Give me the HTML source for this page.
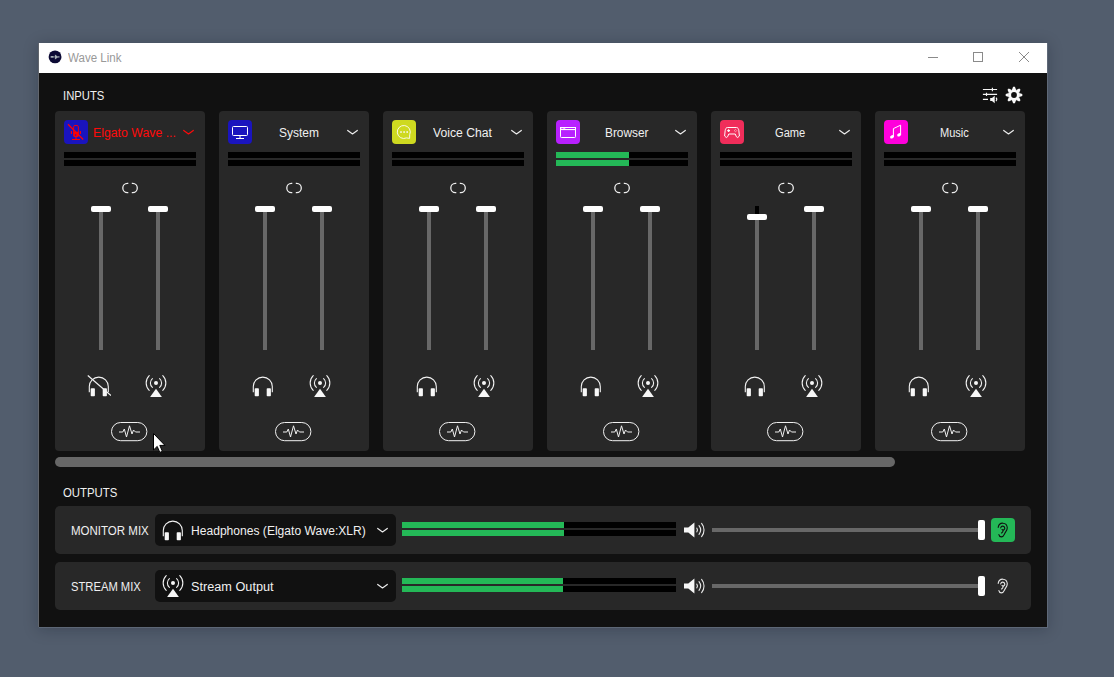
<!DOCTYPE html>
<html lang="en"><head><meta charset="utf-8"><title>Wave Link</title>
<style>
html,body{margin:0;padding:0}
body{width:1114px;height:677px;overflow:hidden;background:#525d6d;position:relative;font-family:"Liberation Sans","DejaVu Sans",sans-serif;font-size:12.500px;color:#f0f0f0}
.abs,.t,svg,.chev{position:absolute}
.t{white-space:nowrap;line-height:16px;height:16px;transform-origin:0 50%}
#win{position:absolute;left:39px;top:43px;width:1008px;height:584px;background:#111111;box-shadow:0 2px 14px 1px rgba(10,15,25,.23)}
#title{position:absolute;left:0;top:0;width:1008px;height:30px;background:#fff}
.card{position:absolute;top:111px;width:150px;height:340px;background:#282828;border-radius:4px}
.ico{position:absolute;left:9px;top:9px;width:24px;height:24px;border-radius:4px}
.meter{position:absolute;background:#000;height:6px}
.meter i{position:absolute;left:0;top:0;height:6px;background:#24b857;display:block}
.track{position:absolute;width:4px;background:#686868}
.knob{position:absolute;width:20px;height:6.300px;background:#fff;border-radius:2px}
.row{position:absolute;left:55px;width:976px;height:48px;background:#282828;border-radius:5px}
.dd{position:absolute;left:155px;width:241px;height:32px;background:#111111;border-radius:5px}
.htrack{position:absolute;height:4px;background:#686868}
.hknob{position:absolute;width:7px;height:20px;background:#fff;border-radius:2px}
</style></head><body>
<div id="win"><div id="title"></div></div>

<svg style="left:47px;top:49px" width="16" height="16" viewBox="0 0 16 16"><circle cx="8.050" cy="7.900" r="6.450" fill="#0c0a35"/><path d="M3.100 7.900L4.300 7.100h2.400v1.600H4.300zM6.900 7.900l0.900-0.600v1.200zM7.900 5.400l3.600 2.500-3.600 2.500zM11.200 7.100l2 0.800-2 0.800z" fill="#a8b0b6"/></svg>
<span class="t " style="left:68.3px;top:50.1px;transform:scaleX(0.9622);color:#999;font-size:12px">Wave Link</span>
<svg style="left:924px;top:48px" width="110" height="18" viewBox="0 0 110 18"><g fill="none" stroke="#8a8a8a" stroke-width="1"><path d="M4 9.500h10"/><rect x="49.500" y="4.500" width="9" height="9"/><path d="M95 4l10 10M105 4l-10 10"/></g></svg>

<span class="t " style="left:63.2px;top:88px;transform:scaleX(0.9017)">INPUTS</span>
<svg style="left:980px;top:85px" width="46" height="20" viewBox="0 0 46 20"><g fill="none" stroke="#f5f5f5" stroke-width="1.150"><path d="M2.900 4.500h14.200M2.900 9.400h14.200M2.900 14.400h5.100M12.400 2.800v3.400M6.500 7.700v3.400"/></g><path d="M10.200 13h1.800l2.700-2.300v7.500L12 16h-1.800z" fill="#f5f5f5"/><path d="M16 12.700a2.500 2.500 0 0 1 0 3.400" fill="none" stroke="#f5f5f5" stroke-width="1.100"/>
<g transform="translate(34 10)"><g fill="#fafafa"><circle r="5.500" /><g id="teeth"><path d="M-2.100 -5.100L-0.900 -8.300H0.900L2.100 -5.100z"/><path d="M-2.100 -5.100L-0.900 -8.300H0.900L2.100 -5.100z" transform="rotate(45)"/><path d="M-2.100 -5.100L-0.900 -8.300H0.900L2.100 -5.100z" transform="rotate(90)"/><path d="M-2.100 -5.100L-0.900 -8.300H0.900L2.100 -5.100z" transform="rotate(135)"/><path d="M-2.100 -5.100L-0.900 -8.300H0.900L2.100 -5.100z" transform="rotate(180)"/><path d="M-2.100 -5.100L-0.900 -8.300H0.900L2.100 -5.100z" transform="rotate(225)"/><path d="M-2.100 -5.100L-0.900 -8.300H0.900L2.100 -5.100z" transform="rotate(270)"/><path d="M-2.100 -5.100L-0.900 -8.300H0.900L2.100 -5.100z" transform="rotate(315)"/></g></g><circle r="2.900" fill="#111"/></g></svg>

<div class="card" style="left:55px">
<div class="ico" style="background:#1a14be"><svg style="left:0;top:0" width="24" height="24" viewBox="0 0 24 24"><g fill="none" stroke="#ff0000" stroke-width="1.1">
   <path d="M9.600 12V6.900a1.400 1.400 0 0 1 1.400-1.400h2a1.400 1.400 0 0 1 1.400 1.400V12" stroke-width="0.900"/>
   <path d="M9.150 11.700h5.700v3.900a1.400 1.400 0 0 1-1.400 1.400h-2.900a1.400 1.400 0 0 1-1.400-1.400z" fill="#ff0000" stroke="none"/>
   <circle cx="11.6" cy="15" r="0.8" fill="#1a14be" stroke="none"/>
   <path d="M12 17v2.4M8 19.5h8M7.4 11v3M16.4 11v3"/>
   <path d="M4 4.3L19.2 19.5" stroke-width="1.3"/></g></svg></div>
<span class="t " style="left:37.8px;top:13.7px;transform:scaleX(0.9834);color:#ff0a0a">Elgato Wave ...</span>
<svg class="chev" style="left:126.5px;top:17.5px" width="13" height="8" viewBox="0 0 13 8"><path d="M1.700 1.400L6.500 4.900 11.300 1.400" fill="none" stroke="#ff0a0a" stroke-width="1.200" stroke-linecap="round" stroke-linejoin="round"/></svg>
<div class="meter" style="left:9px;top:41px;width:132px"></div>
<div class="meter" style="left:9px;top:49px;width:132px"></div>
<svg style="left:66px;top:70px" width="18" height="14" viewBox="0 0 18 14"><g fill="none" stroke="#eee" stroke-width="1.300"><path d="M7.300 2.400H6.400a4.600 4.600 0 0 0 0 9.200h0.900"/><path d="M10.800 2.400h0.900a4.600 4.600 0 0 1 0 9.200h-0.900"/></g></svg>
<div class="track" style="left:44px;top:97.4px;height:141.6px"></div>
<div class="track" style="left:101px;top:98px;height:141px"></div>
<div class="knob" style="left:36px;top:94.9px"></div>
<div class="knob" style="left:93px;top:94.900px"></div>
<svg style="left:32.300px;top:264px" width="24" height="24" viewBox="-1 -1 24 24"><path d="M1.300 16.200V10.600a9.500 9.500 0 0 1 19 0v5.600" fill="none" stroke="#f2f2f2" stroke-width="1.100"/><rect x="2.700" y="12.300" width="4.200" height="8" rx="0.800" fill="#f7f7f7"/><rect x="14.700" y="12.300" width="4.200" height="8" rx="0.800" fill="#f7f7f7"/><path d="M-0.200 -0.500L23 19.600" stroke="#f2f2f2" stroke-width="1.200" fill="none"/></svg>
<svg style="left:90px;top:264px" width="22" height="24" viewBox="0 0 22 24"><g fill="none" stroke="#f2f2f2" stroke-width="1.100" stroke-linecap="round"><path d="M7.400 3.600a5.800 5.800 0 0 0 0 8.800M14.600 3.600a5.800 5.800 0 0 1 0 8.800"/><path d="M4.200 0.700a10.300 10.300 0 0 0 0 14.600M17.800 0.700a10.300 10.300 0 0 1 0 14.600"/></g><circle cx="11" cy="8" r="2" fill="#f7f7f7"/><path d="M11 13.800L16.900 22H5.100z" fill="#f7f7f7"/></svg>
<svg style="left:55px;top:310px" width="40" height="22" viewBox="0 0 40 22"><rect x="1.500" y="1.500" width="35.400" height="18.200" rx="9.100" fill="none" stroke="#f0f0f0" stroke-width="1"/><path d="M9 11h3.800l1.500-3 2.200 8 3-11.200 2.500 8.200 1.500-4 2 2H30" fill="none" stroke="#f0f0f0" stroke-width="1" stroke-linejoin="round"/></svg>
</div>
<div class="card" style="left:219px">
<div class="ico" style="background:#1a14be"><svg style="left:0;top:0" width="24" height="24" viewBox="0 0 24 24"><g fill="none" stroke="#fff" stroke-width="1"><rect x="4.500" y="6.500" width="15" height="9" rx="1"/><path d="M12 16v2M8 18.500h8"/></g></svg></div>
<span class="t " style="left:60.3px;top:13.7px;transform:scaleX(0.9568);color:#f0f0f0">System</span>
<svg class="chev" style="left:126.5px;top:17.5px" width="13" height="8" viewBox="0 0 13 8"><path d="M1.700 1.400L6.500 4.900 11.300 1.400" fill="none" stroke="#ededed" stroke-width="1.200" stroke-linecap="round" stroke-linejoin="round"/></svg>
<div class="meter" style="left:9px;top:41px;width:132px"></div>
<div class="meter" style="left:9px;top:49px;width:132px"></div>
<svg style="left:66px;top:70px" width="18" height="14" viewBox="0 0 18 14"><g fill="none" stroke="#eee" stroke-width="1.300"><path d="M7.300 2.400H6.400a4.600 4.600 0 0 0 0 9.200h0.900"/><path d="M10.800 2.400h0.900a4.600 4.600 0 0 1 0 9.200h-0.900"/></g></svg>
<div class="track" style="left:44px;top:97.4px;height:141.6px"></div>
<div class="track" style="left:101px;top:98px;height:141px"></div>
<div class="knob" style="left:36px;top:94.9px"></div>
<div class="knob" style="left:93px;top:94.900px"></div>
<svg style="left:32.300px;top:264px" width="24" height="24" viewBox="-1 -1 24 24"><path d="M1.300 16.200V10.600a9.500 9.500 0 0 1 19 0v5.600" fill="none" stroke="#f2f2f2" stroke-width="1.100"/><rect x="2.700" y="12.300" width="4.200" height="8" rx="0.800" fill="#f7f7f7"/><rect x="14.700" y="12.300" width="4.200" height="8" rx="0.800" fill="#f7f7f7"/></svg>
<svg style="left:90px;top:264px" width="22" height="24" viewBox="0 0 22 24"><g fill="none" stroke="#f2f2f2" stroke-width="1.100" stroke-linecap="round"><path d="M7.400 3.600a5.800 5.800 0 0 0 0 8.800M14.600 3.600a5.800 5.800 0 0 1 0 8.800"/><path d="M4.200 0.700a10.300 10.300 0 0 0 0 14.600M17.800 0.700a10.300 10.300 0 0 1 0 14.600"/></g><circle cx="11" cy="8" r="2" fill="#f7f7f7"/><path d="M11 13.800L16.900 22H5.100z" fill="#f7f7f7"/></svg>
<svg style="left:55px;top:310px" width="40" height="22" viewBox="0 0 40 22"><rect x="1.500" y="1.500" width="35.400" height="18.200" rx="9.100" fill="none" stroke="#f0f0f0" stroke-width="1"/><path d="M9 11h3.800l1.500-3 2.200 8 3-11.200 2.500 8.200 1.500-4 2 2H30" fill="none" stroke="#f0f0f0" stroke-width="1" stroke-linejoin="round"/></svg>
</div>
<div class="card" style="left:383px">
<div class="ico" style="background:#ced920"><svg style="left:0;top:0" width="24" height="24" viewBox="0 0 24 24"><g fill="none" stroke="#fbfbec" stroke-width="0.95"><path d="M17.700 14.700L17.600 18.400 14.500 17.900A6.500 6.500 0 1 1 17.700 14.700z"/></g><g fill="#f4f4e0"><rect x="8.200" y="11.200" width="1.600" height="1.700"/><rect x="11.300" y="11.200" width="1.600" height="1.700"/><rect x="14.400" y="11.200" width="1.600" height="1.700"/></g></svg></div>
<span class="t " style="left:50.1px;top:13.7px;transform:scaleX(0.9752);color:#f0f0f0">Voice Chat</span>
<svg class="chev" style="left:126.5px;top:17.5px" width="13" height="8" viewBox="0 0 13 8"><path d="M1.700 1.400L6.500 4.900 11.300 1.400" fill="none" stroke="#ededed" stroke-width="1.200" stroke-linecap="round" stroke-linejoin="round"/></svg>
<div class="meter" style="left:9px;top:41px;width:132px"></div>
<div class="meter" style="left:9px;top:49px;width:132px"></div>
<svg style="left:66px;top:70px" width="18" height="14" viewBox="0 0 18 14"><g fill="none" stroke="#eee" stroke-width="1.300"><path d="M7.300 2.400H6.400a4.600 4.600 0 0 0 0 9.200h0.900"/><path d="M10.800 2.400h0.900a4.600 4.600 0 0 1 0 9.200h-0.900"/></g></svg>
<div class="track" style="left:44px;top:97.4px;height:141.6px"></div>
<div class="track" style="left:101px;top:98px;height:141px"></div>
<div class="knob" style="left:36px;top:94.9px"></div>
<div class="knob" style="left:93px;top:94.900px"></div>
<svg style="left:32.300px;top:264px" width="24" height="24" viewBox="-1 -1 24 24"><path d="M1.300 16.200V10.600a9.500 9.500 0 0 1 19 0v5.600" fill="none" stroke="#f2f2f2" stroke-width="1.100"/><rect x="2.700" y="12.300" width="4.200" height="8" rx="0.800" fill="#f7f7f7"/><rect x="14.700" y="12.300" width="4.200" height="8" rx="0.800" fill="#f7f7f7"/></svg>
<svg style="left:90px;top:264px" width="22" height="24" viewBox="0 0 22 24"><g fill="none" stroke="#f2f2f2" stroke-width="1.100" stroke-linecap="round"><path d="M7.400 3.600a5.800 5.800 0 0 0 0 8.800M14.600 3.600a5.800 5.800 0 0 1 0 8.800"/><path d="M4.200 0.700a10.300 10.300 0 0 0 0 14.600M17.800 0.700a10.300 10.300 0 0 1 0 14.600"/></g><circle cx="11" cy="8" r="2" fill="#f7f7f7"/><path d="M11 13.800L16.900 22H5.100z" fill="#f7f7f7"/></svg>
<svg style="left:55px;top:310px" width="40" height="22" viewBox="0 0 40 22"><rect x="1.500" y="1.500" width="35.400" height="18.200" rx="9.100" fill="none" stroke="#f0f0f0" stroke-width="1"/><path d="M9 11h3.800l1.500-3 2.200 8 3-11.200 2.500 8.200 1.500-4 2 2H30" fill="none" stroke="#f0f0f0" stroke-width="1" stroke-linejoin="round"/></svg>
</div>
<div class="card" style="left:547px">
<div class="ico" style="background:#b820ff"><svg style="left:0;top:0" width="24" height="24" viewBox="0 0 24 24"><g fill="none" stroke="#fff" stroke-width="1"><rect x="4.500" y="7.500" width="15" height="10" rx="0.800"/></g><path d="M4 7h16v3.100h-16z" fill="#fff"/><rect x="5.100" y="8" width="13.900" height="1" fill="#b820ff"/><rect x="5.500" y="8" width="0.800" height="1" fill="#f0b8ff"/><rect x="7.100" y="8" width="0.800" height="1" fill="#f0b8ff"/><rect x="8.300" y="8" width="0.900" height="1" fill="#fff"/></svg></div>
<span class="t " style="left:58.2px;top:13.7px;transform:scaleX(0.9498);color:#f0f0f0">Browser</span>
<svg class="chev" style="left:126.5px;top:17.5px" width="13" height="8" viewBox="0 0 13 8"><path d="M1.700 1.400L6.500 4.900 11.300 1.400" fill="none" stroke="#ededed" stroke-width="1.200" stroke-linecap="round" stroke-linejoin="round"/></svg>
<div class="meter" style="left:9px;top:41px;width:132px"><i style="width:73px"></i></div>
<div class="meter" style="left:9px;top:49px;width:132px"><i style="width:73px"></i></div>
<svg style="left:66px;top:70px" width="18" height="14" viewBox="0 0 18 14"><g fill="none" stroke="#eee" stroke-width="1.300"><path d="M7.300 2.400H6.400a4.600 4.600 0 0 0 0 9.200h0.900"/><path d="M10.800 2.400h0.900a4.600 4.600 0 0 1 0 9.200h-0.900"/></g></svg>
<div class="track" style="left:44px;top:97.4px;height:141.6px"></div>
<div class="track" style="left:101px;top:98px;height:141px"></div>
<div class="knob" style="left:36px;top:94.9px"></div>
<div class="knob" style="left:93px;top:94.900px"></div>
<svg style="left:32.300px;top:264px" width="24" height="24" viewBox="-1 -1 24 24"><path d="M1.300 16.200V10.600a9.500 9.500 0 0 1 19 0v5.600" fill="none" stroke="#f2f2f2" stroke-width="1.100"/><rect x="2.700" y="12.300" width="4.200" height="8" rx="0.800" fill="#f7f7f7"/><rect x="14.700" y="12.300" width="4.200" height="8" rx="0.800" fill="#f7f7f7"/></svg>
<svg style="left:90px;top:264px" width="22" height="24" viewBox="0 0 22 24"><g fill="none" stroke="#f2f2f2" stroke-width="1.100" stroke-linecap="round"><path d="M7.400 3.600a5.800 5.800 0 0 0 0 8.800M14.600 3.600a5.800 5.800 0 0 1 0 8.800"/><path d="M4.200 0.700a10.300 10.300 0 0 0 0 14.600M17.800 0.700a10.300 10.300 0 0 1 0 14.600"/></g><circle cx="11" cy="8" r="2" fill="#f7f7f7"/><path d="M11 13.800L16.900 22H5.100z" fill="#f7f7f7"/></svg>
<svg style="left:55px;top:310px" width="40" height="22" viewBox="0 0 40 22"><rect x="1.500" y="1.500" width="35.400" height="18.200" rx="9.100" fill="none" stroke="#f0f0f0" stroke-width="1"/><path d="M9 11h3.800l1.500-3 2.200 8 3-11.200 2.500 8.200 1.500-4 2 2H30" fill="none" stroke="#f0f0f0" stroke-width="1" stroke-linejoin="round"/></svg>
</div>
<div class="card" style="left:711px">
<div class="ico" style="background:#f02d5a"><svg style="left:0;top:0" width="24" height="24" viewBox="0 0 24 24"><g fill="none" stroke="#fff" stroke-width="1" stroke-linejoin="round" transform="translate(12 0) scale(0.95 1) translate(-12 0)"><path d="M7.300 7.500h9.400c1.500 0 2.200 1.300 2.500 3.200l0.600 5.300-1.800 1.500-1.400-0.800-1.200-2.700H8.600l-1.200 2.700-1.400 0.800-1.800-1.500 0.600-5.300c0.300-1.900 1-3.200 2.500-3.200z"/></g><path d="M8.600 9.200v2.800M7.200 10.600h2.800" stroke="#fff" stroke-width="1.100"/><path d="M15.500 9.300l1.300 1.300-1.300 1.300-1.300-1.300z" fill="none" stroke="#ffd0dc" stroke-width="0.600"/></svg></div>
<span class="t " style="left:64.1px;top:13.7px;transform:scaleX(0.8882);color:#f0f0f0">Game</span>
<svg class="chev" style="left:126.5px;top:17.5px" width="13" height="8" viewBox="0 0 13 8"><path d="M1.700 1.400L6.500 4.900 11.300 1.400" fill="none" stroke="#ededed" stroke-width="1.200" stroke-linecap="round" stroke-linejoin="round"/></svg>
<div class="meter" style="left:9px;top:41px;width:132px"></div>
<div class="meter" style="left:9px;top:49px;width:132px"></div>
<svg style="left:66px;top:70px" width="18" height="14" viewBox="0 0 18 14"><g fill="none" stroke="#eee" stroke-width="1.300"><path d="M7.300 2.400H6.400a4.600 4.600 0 0 0 0 9.200h0.900"/><path d="M10.800 2.400h0.900a4.600 4.600 0 0 1 0 9.200h-0.900"/></g></svg>
<div class="track" style="left:44px;top:95px;height:9px;background:#000"></div>
<div class="track" style="left:44px;top:105.3px;height:133.7px"></div>
<div class="track" style="left:101px;top:98px;height:141px"></div>
<div class="knob" style="left:36px;top:102.8px"></div>
<div class="knob" style="left:93px;top:94.900px"></div>
<svg style="left:32.300px;top:264px" width="24" height="24" viewBox="-1 -1 24 24"><path d="M1.300 16.200V10.600a9.500 9.500 0 0 1 19 0v5.600" fill="none" stroke="#f2f2f2" stroke-width="1.100"/><rect x="2.700" y="12.300" width="4.200" height="8" rx="0.800" fill="#f7f7f7"/><rect x="14.700" y="12.300" width="4.200" height="8" rx="0.800" fill="#f7f7f7"/></svg>
<svg style="left:90px;top:264px" width="22" height="24" viewBox="0 0 22 24"><g fill="none" stroke="#f2f2f2" stroke-width="1.100" stroke-linecap="round"><path d="M7.400 3.600a5.800 5.800 0 0 0 0 8.800M14.600 3.600a5.800 5.800 0 0 1 0 8.800"/><path d="M4.200 0.700a10.300 10.300 0 0 0 0 14.600M17.800 0.700a10.300 10.300 0 0 1 0 14.600"/></g><circle cx="11" cy="8" r="2" fill="#f7f7f7"/><path d="M11 13.800L16.900 22H5.100z" fill="#f7f7f7"/></svg>
<svg style="left:55px;top:310px" width="40" height="22" viewBox="0 0 40 22"><rect x="1.500" y="1.500" width="35.400" height="18.200" rx="9.100" fill="none" stroke="#f0f0f0" stroke-width="1"/><path d="M9 11h3.800l1.500-3 2.200 8 3-11.200 2.500 8.200 1.500-4 2 2H30" fill="none" stroke="#f0f0f0" stroke-width="1" stroke-linejoin="round"/></svg>
</div>
<div class="card" style="left:875px">
<div class="ico" style="background:#ff00dc"><svg style="left:0;top:0" width="24" height="24" viewBox="0 0 24 24"><g fill="none" stroke="#fff" stroke-width="1"><path d="M9.400 17V8.600l7.200-3.400V15"/></g><ellipse cx="8" cy="16.800" rx="2" ry="1.500" fill="#fff" transform="rotate(-25 8 16.800)"/><ellipse cx="15.100" cy="14.800" rx="2" ry="1.500" fill="#fff" transform="rotate(-25 15.100 14.800)"/></svg></div>
<span class="t " style="left:65.2px;top:13.7px;transform:scaleX(0.8838);color:#f0f0f0">Music</span>
<svg class="chev" style="left:126.5px;top:17.5px" width="13" height="8" viewBox="0 0 13 8"><path d="M1.700 1.400L6.500 4.900 11.300 1.400" fill="none" stroke="#ededed" stroke-width="1.200" stroke-linecap="round" stroke-linejoin="round"/></svg>
<div class="meter" style="left:9px;top:41px;width:132px"></div>
<div class="meter" style="left:9px;top:49px;width:132px"></div>
<svg style="left:66px;top:70px" width="18" height="14" viewBox="0 0 18 14"><g fill="none" stroke="#eee" stroke-width="1.300"><path d="M7.300 2.400H6.400a4.600 4.600 0 0 0 0 9.200h0.900"/><path d="M10.800 2.400h0.900a4.600 4.600 0 0 1 0 9.200h-0.900"/></g></svg>
<div class="track" style="left:44px;top:97.4px;height:141.6px"></div>
<div class="track" style="left:101px;top:98px;height:141px"></div>
<div class="knob" style="left:36px;top:94.9px"></div>
<div class="knob" style="left:93px;top:94.900px"></div>
<svg style="left:32.300px;top:264px" width="24" height="24" viewBox="-1 -1 24 24"><path d="M1.300 16.200V10.600a9.500 9.500 0 0 1 19 0v5.600" fill="none" stroke="#f2f2f2" stroke-width="1.100"/><rect x="2.700" y="12.300" width="4.200" height="8" rx="0.800" fill="#f7f7f7"/><rect x="14.700" y="12.300" width="4.200" height="8" rx="0.800" fill="#f7f7f7"/></svg>
<svg style="left:90px;top:264px" width="22" height="24" viewBox="0 0 22 24"><g fill="none" stroke="#f2f2f2" stroke-width="1.100" stroke-linecap="round"><path d="M7.400 3.600a5.800 5.800 0 0 0 0 8.800M14.600 3.600a5.800 5.800 0 0 1 0 8.800"/><path d="M4.200 0.700a10.300 10.300 0 0 0 0 14.600M17.800 0.700a10.300 10.300 0 0 1 0 14.600"/></g><circle cx="11" cy="8" r="2" fill="#f7f7f7"/><path d="M11 13.800L16.900 22H5.100z" fill="#f7f7f7"/></svg>
<svg style="left:55px;top:310px" width="40" height="22" viewBox="0 0 40 22"><rect x="1.500" y="1.500" width="35.400" height="18.200" rx="9.100" fill="none" stroke="#f0f0f0" stroke-width="1"/><path d="M9 11h3.800l1.500-3 2.200 8 3-11.200 2.500 8.200 1.500-4 2 2H30" fill="none" stroke="#f0f0f0" stroke-width="1" stroke-linejoin="round"/></svg>
</div>
<div class="abs" style="left:55px;top:457px;width:840px;height:10px;border-radius:5px;background:#676767"></div>
<span class="t " style="left:63.4px;top:485px;transform:scaleX(0.9095)">OUTPUTS</span>
<div class="row" style="top:506px"></div>
<span class="t " style="left:71.2px;top:523px;transform:scaleX(0.9207)">MONITOR MIX</span>
<div class="dd" style="top:514px"></div>
<svg style="left:161.200px;top:519px" width="24" height="24" viewBox="-1 -1 24 24"><path d="M1.300 16.200V10.600a9.500 9.500 0 0 1 19 0v5.600" fill="none" stroke="#f2f2f2" stroke-width="1.100"/><rect x="2.700" y="12.300" width="4.200" height="8" rx="0.800" fill="#f7f7f7"/><rect x="14.700" y="12.300" width="4.200" height="8" rx="0.800" fill="#f7f7f7"/></svg>
<span class="t " style="left:190.8px;top:523px;transform:scaleX(0.9663)">Headphones (Elgato Wave:XLR)</span>
<svg class="chev" style="left:375.5px;top:526.5px" width="13" height="8" viewBox="0 0 13 8"><path d="M1.700 1.400L6.500 4.900 11.300 1.400" fill="none" stroke="#ededed" stroke-width="1.200" stroke-linecap="round" stroke-linejoin="round"/></svg>
<div class="meter" style="left:402px;top:522px;width:274px"><i style="width:162px"></i></div>
<div class="meter" style="left:402px;top:530px;width:274px"><i style="width:162px"></i></div>
<svg style="left:684px;top:522px" width="22" height="16" viewBox="0 0 22 16"><path d="M0 5.500h4.300L10.400 0.400v15.200L4.300 10.500H0z" fill="#f7f7f7"/><g fill="none" stroke="#e8e8e8" stroke-width="1.100" stroke-linecap="round"><path d="M12.800 6.200a3 3 0 0 1 0 3.600"/><path d="M15 3.700a7 7 0 0 1 0 8.600"/><path d="M17.600 1.300a10.500 10.500 0 0 1 0 13.400"/></g></svg>
<div class="htrack" style="left:712px;top:528px;width:268px"></div>
<div class="hknob" style="left:977.500px;top:520px"></div>
<div class="abs" style="left:991px;top:518px;width:24px;height:24px;border-radius:4px;background:#24b857"></div>
<svg style="left:996px;top:520.7px" width="14" height="18.500" viewBox="0 0 14 17" preserveAspectRatio="none"><path d="M2.200 5.800A4.600 4.600 0 0 1 11.300 6.200c0 2.400-1.700 3.600-2.600 5.300-0.700 1.400-1.300 3-3.300 3-1.400 0-2.300-0.900-2.500-2" fill="none" stroke="#101010" stroke-width="1.100" stroke-linecap="round"/><path d="M4.700 6.300a2.100 2.100 0 0 1 4.100 0.300c0 1-0.700 1.400-1.400 1.800M6 7.800c1 0.300 1.400 1.300 0.600 2.300-0.300 0.400-0.700 0.600-1.100 0.900" fill="none" stroke="#101010" stroke-width="1.100" stroke-linecap="round"/></svg>
<div class="row" style="top:562px"></div>
<span class="t " style="left:71.2px;top:579px;transform:scaleX(0.8972)">STREAM MIX</span>
<div class="dd" style="top:570px"></div>
<svg style="left:162px;top:575px" width="22" height="24" viewBox="0 0 22 24"><g fill="none" stroke="#f2f2f2" stroke-width="1.100" stroke-linecap="round"><path d="M7.400 3.600a5.800 5.800 0 0 0 0 8.800M14.600 3.600a5.800 5.800 0 0 1 0 8.800"/><path d="M4.200 0.700a10.300 10.300 0 0 0 0 14.600M17.800 0.700a10.300 10.300 0 0 1 0 14.600"/></g><circle cx="11" cy="8" r="2" fill="#f7f7f7"/><path d="M11 13.800L16.900 22H5.100z" fill="#f7f7f7"/></svg>
<span class="t " style="left:190.8px;top:579px;transform:scaleX(1.0160)">Stream Output</span>
<svg class="chev" style="left:375.5px;top:582.5px" width="13" height="8" viewBox="0 0 13 8"><path d="M1.700 1.400L6.500 4.900 11.300 1.400" fill="none" stroke="#ededed" stroke-width="1.200" stroke-linecap="round" stroke-linejoin="round"/></svg>
<div class="meter" style="left:402px;top:578px;width:274px"><i style="width:161px"></i></div>
<div class="meter" style="left:402px;top:586px;width:274px"><i style="width:161px"></i></div>
<svg style="left:684px;top:578px" width="22" height="16" viewBox="0 0 22 16"><path d="M0 5.500h4.300L10.400 0.400v15.200L4.300 10.500H0z" fill="#f7f7f7"/><g fill="none" stroke="#e8e8e8" stroke-width="1.100" stroke-linecap="round"><path d="M12.800 6.200a3 3 0 0 1 0 3.600"/><path d="M15 3.700a7 7 0 0 1 0 8.600"/><path d="M17.600 1.300a10.500 10.500 0 0 1 0 13.400"/></g></svg>
<div class="htrack" style="left:712px;top:584px;width:268px"></div>
<div class="hknob" style="left:977.500px;top:576px"></div>
<svg style="left:996px;top:576.7px" width="14" height="18.500" viewBox="0 0 14 17" preserveAspectRatio="none"><path d="M2.200 5.800A4.600 4.600 0 0 1 11.300 6.200c0 2.400-1.700 3.600-2.600 5.300-0.700 1.400-1.300 3-3.300 3-1.400 0-2.300-0.900-2.500-2" fill="none" stroke="#e8e8e8" stroke-width="1.100" stroke-linecap="round"/><path d="M4.700 6.300a2.100 2.100 0 0 1 4.100 0.300c0 1-0.700 1.400-1.400 1.800M6 7.800c1 0.300 1.400 1.300 0.600 2.300-0.300 0.400-0.700 0.600-1.100 0.900" fill="none" stroke="#e8e8e8" stroke-width="1.100" stroke-linecap="round"/></svg>
<div class="abs" style="left:38px;top:43px;width:1px;height:584px;background:#62666d"></div><div class="abs" style="left:1047px;top:43px;width:1px;height:585px;background:rgba(120,130,146,.45)"></div><div class="abs" style="left:39px;top:627px;width:1008px;height:1px;background:rgba(120,130,146,.45)"></div>
<svg style="left:152px;top:432px" width="14" height="21" viewBox="0 0 14 21"><path d="M1.500 1.500v16.500l3.700-3.600 2.600 6 2.600-1.100-2.600-5.900h5.200z" fill="#fff" stroke="#000" stroke-width="1" stroke-linejoin="miter"/></svg>
</body></html>
